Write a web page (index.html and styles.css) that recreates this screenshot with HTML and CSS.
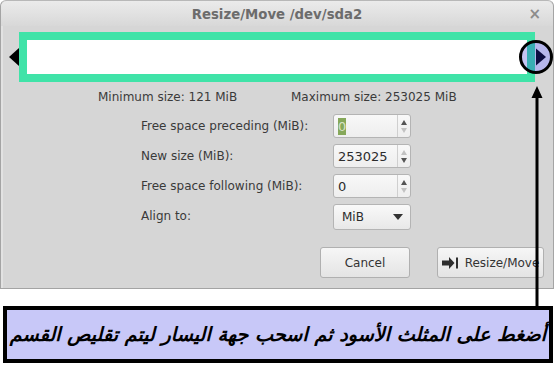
FILE: index.html
```html
<!DOCTYPE html>
<html lang="en">
<head>
<meta charset="utf-8">
<title>Resize/Move /dev/sda2</title>
<link rel="stylesheet" href="styles.css">
</head>
<body>
<div class="page">
  <div class="dialog">
    <div class="titlebar">
      <span></span>
      <span class="title">Resize/Move /dev/sda2</span>
      <span class="close">×</span>
    </div>
    <div class="bar-row">
      <span class="tri-left"></span>
      <div class="bar"></div>
    </div>
    <div class="limits">
      <span>Minimum size: 121 MiB</span>
      <span>Maximum size: 253025 MiB</span>
    </div>
    <div class="form">
      <label class="lbl">Free space preceding (MiB):</label>
      <div class="spin"><span class="val"><span class="sel">0</span></span><span class="btns"><span class="up on"></span><span class="down off"></span></span></div>
      <label class="lbl">New size (MiB):</label>
      <div class="spin"><span class="val">253025</span><span class="btns"><span class="up off"></span><span class="down on"></span></span></div>
      <label class="lbl">Free space following (MiB):</label>
      <div class="spin"><span class="val">0</span><span class="btns"><span class="up on"></span><span class="down off"></span></span></div>
      <label class="lbl">Align to:</label>
      <div class="combo"><span>MiB</span><span class="caret"></span></div>
    </div>
    <div class="buttons">
      <button class="btn cancel">Cancel</button>
      <button class="btn resize"><svg class="ico" width="17" height="12" viewBox="0 0 17 12"><path d="M0 3.5h7V0L12.5 6L7 12V8.5H0z" fill="#2e2e2e"/><rect x="14" y="0.5" width="2" height="11" fill="#2e2e2e"/></svg>Resize/Move</button>
    </div>
  </div>
  <div class="callout" dir="rtl"><span class="callout-text">أضغط على المثلث الأسود ثم اسحب جهة اليسار ليتم تقليص القسم</span></div>

  <svg class="handle" width="36" height="36" viewBox="0 0 36 36">
    <clipPath id="c"><circle cx="18" cy="18" r="15"/></clipPath>
    <circle cx="18" cy="18" r="15" fill="#b6b6ec"/>
    <rect x="0" y="0" width="9" height="36" fill="#c4c4f2" clip-path="url(#c)"/>
    <rect x="9" y="0" width="8" height="36" fill="#38aeb4" clip-path="url(#c)"/>
    <path d="M18 9.5L28 18L18 26.5z" fill="#0c0c40"/>
    <circle cx="18" cy="18" r="15.5" fill="none" stroke="#000" stroke-width="3"/>
  </svg>
  <svg class="pointer" width="14" height="222" viewBox="0 0 14 222">
    <path d="M7 0L12.5 12H8.5V222H5.5V12H1.5z" fill="#000"/>
  </svg>
</div>
</body>
</html>
```

FILE: styles.css
```css
* { box-sizing: border-box; }
html, body { margin: 0; padding: 0; background: #fff; }
.page {
  position: relative;
  width: 559px;
  height: 379px;
  overflow: hidden;
  font-family: "DejaVu Sans", sans-serif;
  color: #3a3a3a;
}
.dialog {
  width: 554px;
  height: 289px;
  background: #d6d6d6;
  border: 1px solid #a4a4a4;
  border-top-color: #b8b8b8;
  border-radius: 6px 6px 0 0;
  box-shadow: inset 5px 0 0 -3px #e2e2e2;
}
.titlebar {
  height: 25px;
  display: grid;
  grid-template-columns: 1fr auto 1fr;
  align-items: center;
  background: linear-gradient(#ebebeb, #d8d8d8);
  border-radius: 6px 6px 0 0;
}
.title {
  font-weight: bold;
  font-size: 13.3px;
  color: #6c6c6c;
  padding-top: 1px;
}
.close {
  justify-self: end;
  padding-right: 12px;
  font-size: 15px;
  font-weight: bold;
  color: #8c8c8c;
}
.bar-row {
  display: flex;
  align-items: center;
  margin-top: 6px;
  padding-left: 8px;
  height: 50px;
}
.tri-left {
  width: 0;
  height: 0;
  border-top: 9px solid transparent;
  border-bottom: 9px solid transparent;
  border-right: 10px solid #000;
}
.bar {
  width: 516px;
  height: 50px;
  border: 8px solid #40e3a8;
  background: #fff;
}
.limits {
  display: grid;
  grid-template-columns: 193px auto;
  padding-left: 97px;
  margin-top: 8px;
  font-size: 12px;
  line-height: 14px;
}
.form {
  display: grid;
  grid-template-columns: 192px 78px;
  grid-auto-rows: 24px;
  row-gap: 6px;
  padding-left: 140px;
  margin-top: 10px;
  font-size: 12px;
  align-items: center;
}
.spin {
  display: flex;
  height: 24px;
  border: 1px solid #b4b4b4;
  border-radius: 3px;
  background: linear-gradient(#f8f8f8, #eeeeee);
  overflow: hidden;
}
.val {
  flex: 1;
  display: flex;
  align-items: center;
  padding-left: 4px;
  font-size: 13px;
  color: #2c2c2c;
}
.sel {
  background: #86a85a;
  color: #d8e2c8;
  padding: 1px 0;
}
.btns {
  width: 13px;
  border-left: 1px solid #cfcfcf;
  display: flex;
  flex-direction: column;
  align-items: center;
  justify-content: space-around;
  padding: 3px 0;
}
.up, .down {
  width: 0;
  height: 0;
  border-left: 3px solid transparent;
  border-right: 3px solid transparent;
}
.up { border-bottom: 5px solid #555; }
.down { border-top: 5px solid #555; }
.up.off { border-bottom-color: #c2c2c2; }
.down.off { border-top-color: #c2c2c2; }
.combo {
  display: flex;
  align-items: center;
  justify-content: space-between;
  height: 26px;
  margin-top: 2px;
  padding: 0 7px 0 8px;
  border: 1px solid #b4b4b4;
  border-radius: 3px;
  background: linear-gradient(#f9f9f9, #e8e8e8);
  font-size: 12px;
  color: #2c2c2c;
}
.caret {
  width: 0;
  height: 0;
  border-left: 5px solid transparent;
  border-right: 5px solid transparent;
  border-top: 6px solid #333;
}
.buttons {
  display: flex;
  justify-content: flex-end;
  gap: 27px;
  padding-right: 9px;
  margin-top: 19px;
}
.btn {
  height: 31px;
  border: 1px solid #b0b0b0;
  border-radius: 3px;
  background: linear-gradient(#f6f6f6, #e4e4e4);
  font-family: "DejaVu Sans", sans-serif;
  font-size: 12px;
  color: #333;
  display: flex;
  align-items: center;
  justify-content: center;
  gap: 6px;
  padding: 0;
}
.cancel { width: 90px; }
.resize { width: 107px; }
.callout {
  margin: 17px 0 0 3px;
  width: 550px;
  height: 57px;
  border: 4px solid #000;
  background: #c8c8f8;
  display: flex;
  align-items: center;
  justify-content: center;
  padding: 0 4px;
}
.callout-text {
  font-family: "DejaVu Sans", sans-serif;
  font-weight: bold;
  font-style: italic;
  font-size: 19.2px;
  color: #000;
  white-space: nowrap;
}
.handle {
  position: absolute;
  left: 518px;
  top: 39px;
}
.pointer {
  position: absolute;
  left: 530px;
  top: 86px;
}
```
